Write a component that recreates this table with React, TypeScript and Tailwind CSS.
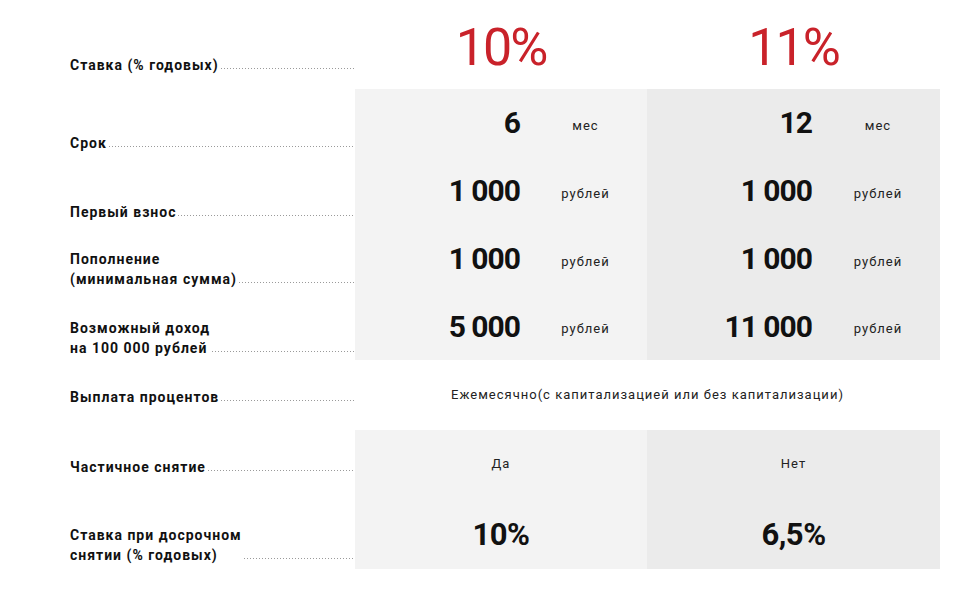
import React from 'react';

type Row = {
  label: string[];
  h: string;
  labelPad: string;
  kind: 'amount' | 'span' | 'text' | 'big';
  a?: string;
  b?: string;
  unitA?: string;
  unitB?: string;
};

const rows: Row[] = [
  { label: ['Срок'], h: 'h-[68px]', labelPad: 'pb-[4px]', kind: 'amount', a: '6', b: '12', unitA: 'мес', unitB: 'мес' },
  { label: ['Первый взнос'], h: 'h-[68px]', labelPad: 'pb-[3px]', kind: 'amount', a: '1 000', b: '1 000', unitA: 'рублей', unitB: 'рублей' },
  { label: ['Пополнение', '(минимальная сумма)'], h: 'h-[68px]', labelPad: 'pb-[4px]', kind: 'amount', a: '1 000', b: '1 000', unitA: 'рублей', unitB: 'рублей' },
  { label: ['Возможный доход', 'на 100 000 рублей'], h: 'h-[67px]', labelPad: 'pb-[2px]', kind: 'amount', a: '5 000', b: '11 000', unitA: 'рублей', unitB: 'рублей' },
  { label: ['Выплата процентов'], h: 'h-[70px]', labelPad: 'pb-[23px]', kind: 'span', a: 'Ежемесячно(с капитализацией или без капитализации)' },
  { label: ['Частичное снятие'], h: 'h-[70px]', labelPad: 'pb-[23px]', kind: 'text', a: 'Да', b: 'Нет' },
  { label: ['Ставка при досрочном', 'снятии (% годовых)'], h: 'h-[69px]', labelPad: 'pb-[4px]', kind: 'big', a: '10%', b: '6,5%' },
];

const font = "font-['Roboto','Liberation_Sans',sans-serif]";

function Leader() {
  return (
    <span className="flex-1 h-px mb-[6px] ml-[2px] bg-[linear-gradient(to_right,#9a9a9a_1px,transparent_1px)] bg-[length:3px_1px] bg-repeat-x" />
  );
}

function Label({ lines, pad }: { lines: string[]; pad: string }) {
  return (
    <div className={`flex items-end ${pad}`}>
      <span className="text-[14px] leading-[20px] font-bold tracking-[1px] text-[#111] whitespace-nowrap">
        {lines.map((l, i) => (
          <React.Fragment key={i}>
            {i > 0 && <br />}
            {l}
          </React.Fragment>
        ))}
      </span>
      <Leader />
    </div>
  );
}

function Amount({ value, unit }: { value: string; unit: string }) {
  return (
    <div className="flex items-center h-full">
      <div className="w-[165px] text-right text-[30px] font-bold tracking-[-1px] text-[#111] leading-none">{value}</div>
      <div className="flex-1 text-center pl-[4px] pt-[5px] text-[13px] tracking-[1px] text-[#222]">{unit}</div>
    </div>
  );
}

function Cell({ kind, value, unit }: { kind: Row['kind']; value: string; unit?: string }) {
  if (kind === 'amount') return <Amount value={value} unit={unit!} />;
  if (kind === 'text')
    return <div className="h-full flex items-center justify-center pb-[3px] text-[13px] tracking-[1px] text-[#222]">{value}</div>;
  return (
    <div className="h-full flex items-center justify-center pt-[2px] text-[31px] font-bold tracking-[-0.5px] text-[#111]">{value}</div>
  );
}

export default function App() {
  return (
    <div className={`w-[968px] h-[589px] bg-white ${font}`}>
      <div className="grid grid-cols-[285px_292px_293px] pl-[70px]">
        {/* header */}
        <div className="h-[89px]">
          <Label lines={['Ставка (% годовых)']} pad="h-full pb-[14px]" />
        </div>
        <div className="h-[89px] flex items-center justify-center pt-[6px] text-[52px] font-normal tracking-[-2px] text-[#c9222a] leading-none">
          10%
        </div>
        <div className="h-[89px] flex items-center justify-center pt-[6px] text-[52px] font-normal tracking-[-2px] text-[#c9222a] leading-none">
          11%
        </div>

        {rows.map((r, i) => (
          <React.Fragment key={i}>
            <div className={`${r.h} flex flex-col justify-end`}>
              <Label lines={r.label} pad={r.labelPad} />
            </div>
            {r.kind === 'span' ? (
              <div className={`${r.h} col-span-2 flex items-center justify-center text-[13px] tracking-[1px] text-[#222]`}>{r.a}</div>
            ) : (
              <>
                <div className={`${r.h} bg-[#f3f3f3]`}>
                  <Cell kind={r.kind} value={r.a!} unit={r.unitA} />
                </div>
                <div className={`${r.h} bg-[#ebebeb]`}>
                  <Cell kind={r.kind} value={r.b!} unit={r.unitB} />
                </div>
              </>
            )}
          </React.Fragment>
        ))}
      </div>
    </div>
  );
}
